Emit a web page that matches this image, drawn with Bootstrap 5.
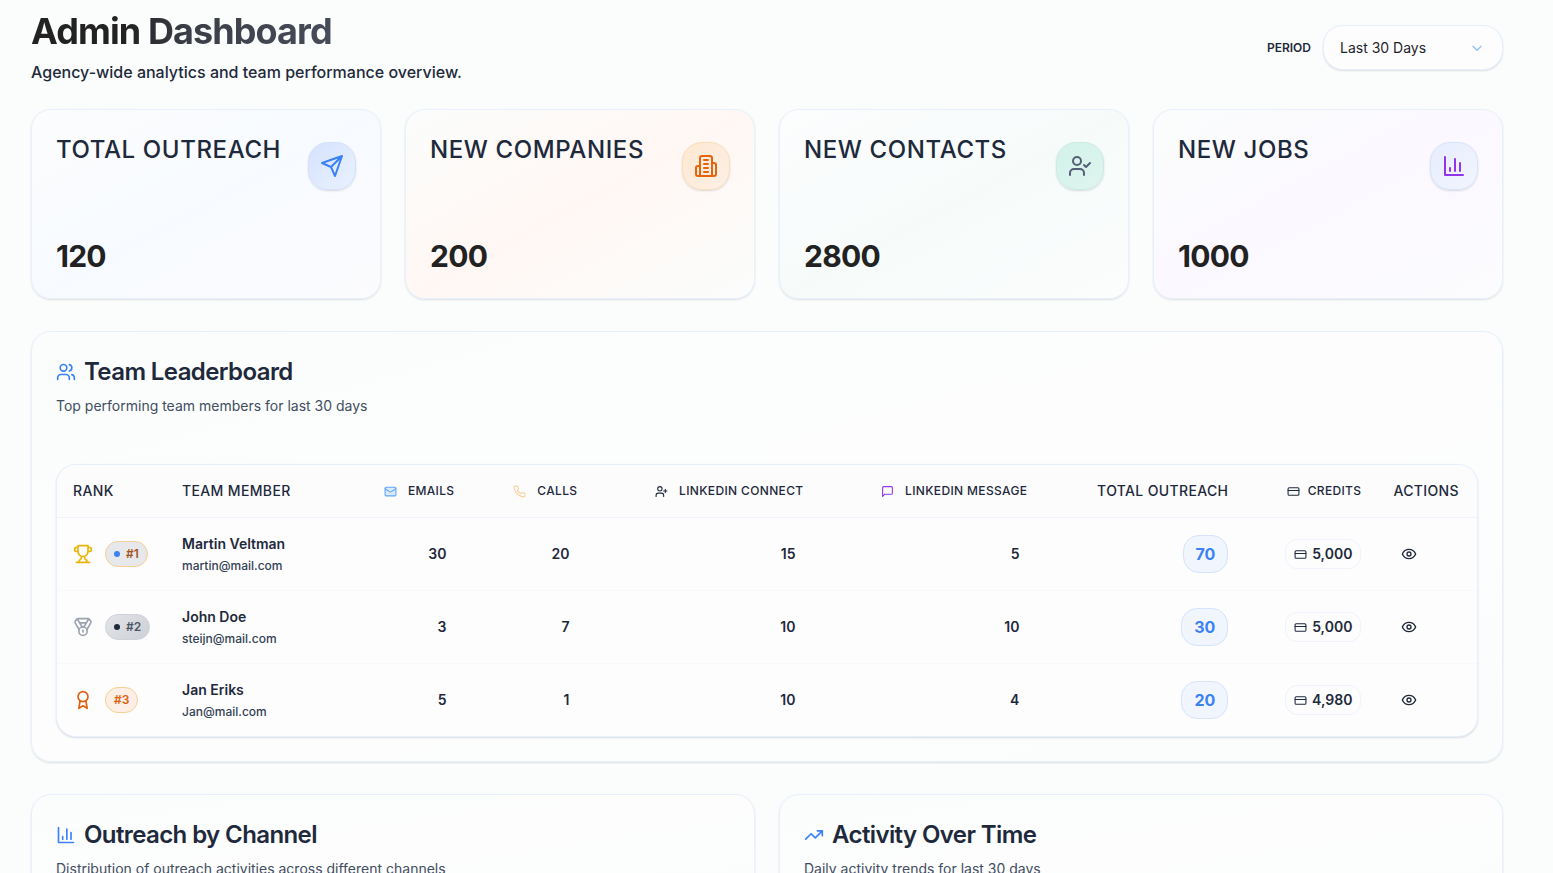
<!DOCTYPE html>
<html lang="en">
<head>
<meta charset="utf-8">
<meta name="viewport" content="width=device-width, initial-scale=1">
<title>Admin Dashboard</title>
<link rel="stylesheet" href="https://cdn.jsdelivr.net/npm/bootstrap@5.3.0/dist/css/bootstrap.min.css">
<style>
  :root { --ink: #1e293b; --line: #e8f0fe; --blue: #3b82f6; }
  body { font-family: Inter, "Liberation Sans", sans-serif; color: var(--ink); background: #fbfdfc; font-size: 14px; line-height: 20px; }
  .page { padding: 11px 50px 32px 31px; }
  svg.ico { fill: none; stroke: currentColor; stroke-width: 2; stroke-linecap: round; stroke-linejoin: round; flex: none; width: 20px; height: 20px; }
  svg.ico-s { width: 13px; height: 13px; }
  svg.ico-m { width: 16px; height: 16px; }
  svg.ico-l { width: 24px; height: 24px; }

  .page-title { font-size: 36px; line-height: 40px; font-weight: 700; letter-spacing: -0.025em; margin: 0 0 9px; background: linear-gradient(to right, #222 22%, #3b3e46 36%, #4b5060 80%); -webkit-background-clip: text; background-clip: text; color: transparent; }
  .page-sub { font-size: 16px; line-height: 24px; font-weight: 500; margin: 0; }
  .page-head { margin-bottom: 25px; }
  .period-label { font-size: 12px; font-weight: 600; }
  .period-select { width: 180px; height: 45px; border: 1px solid var(--line); border-radius: 20px; padding: 0 16px; font-size: 14px; color: #1f2328; background-color: #fdfdfe; background-position: right 18px center; background-size: 14px 14px; box-shadow: 0 1px 2px rgba(30,41,59,.14);
    background-image: url("data:image/svg+xml,%3Csvg xmlns='http://www.w3.org/2000/svg' viewBox='0 0 24 24' fill='none' stroke='%2393c0fd' stroke-width='2.4' stroke-linecap='round' stroke-linejoin='round'%3E%3Cpath d='m5 9 7 7 7-7'/%3E%3C/svg%3E"); }

  .panel { border: 1px solid var(--line); border-radius: 20px; padding: 24px; background: linear-gradient(to bottom right, #fbfdfc, #fdfdfe 50%, #fbfdfc); box-shadow: 0 1px 2px rgba(30,41,59,.14); }
  .leaderboard { margin-top: 32px; }
  .charts { margin-top: 8px; }
  .panel-title { font-size: 24px; line-height: 32px; font-weight: 600; letter-spacing: -0.025em; margin: 0 0 8px; }
  .panel-title svg { color: var(--blue); }
  .panel-sub { color: #414d60; margin: 0; }

  .stat-name { font-size: 24px; line-height: 32px; font-weight: 500; letter-spacing: 0.025em; margin: 0; }
  .stat-value { font-size: 30px; line-height: 36px; font-weight: 700; letter-spacing: -0.025em; color: #222; margin-top: 48px; }
  .stat-icon { width: 48px; height: 48px; margin-top: 8px; border: 1px solid; border-radius: 20px; box-shadow: 0 1px 2px rgba(30,41,59,.16); }
  .stat-blue { background: linear-gradient(to bottom right, #fcfdfd, #f7faff 50%, #fcfcfe); }
  .stat-orange { background: linear-gradient(to bottom right, #fbfdfc, #fff7f4 50%, #fbfdfc); }
  .stat-green { background: linear-gradient(to bottom right, #fdfdfe, #f6fbfa 50%, #fcfdfd); }
  .stat-purple { background: linear-gradient(to bottom right, #fbfdfc, #fbf8ff 50%, #fcfcfe); }
  .stat-blue .stat-icon { color: var(--blue); border-color: #d5e1fd; background: linear-gradient(135deg, #d6e2fe, #e8f2fe); }
  .stat-orange .stat-icon { color: #e8630c; border-color: #f9deb9; background: linear-gradient(135deg, #fde8d2, #fdf0e6); }
  .stat-green .stat-icon { color: #526175; border-color: #cdebe2; background: linear-gradient(135deg, #d3f2ea, #def5ee); }
  .stat-purple .stat-icon { color: #9333ea; border-color: #d8e3fc; background: linear-gradient(135deg, #e6edfd, #f3f5fe); }

  .board { border: 1px solid var(--line); border-radius: 20px; margin-top: 48px; overflow: hidden; background: #fdfdfe; box-shadow: 0 1px 2px rgba(30,41,59,.16); }
  .board table { width: 100%; table-layout: fixed; margin: 0; border-collapse: separate; border-spacing: 0; }
  .board th { height: 53px; padding: 0 16px; font-weight: 500; letter-spacing: 0.025em; white-space: nowrap; border-bottom: 1px solid #eef2fd; background: #fcfcfd; }
  .board td { height: 73px; padding: 0 16px; border-bottom: 1px solid #f7f9fd; }
  .board tr:last-child td { height: 72px; border-bottom: 0; }
  .board .num { text-align: right; }
  .board td.count { padding-right: 24px; font-weight: 600; }
  .head-label { display: flex; align-items: center; justify-content: flex-end; gap: 11px; font-size: 12px; }
  .head-label.tight { gap: 8px; }
  .c-rank { width: 7.68%; } .c-member { width: 14.26%; } .c-mail { width: 7.18%; } .c-call { width: 8.66%; } .c-conn { width: 15.92%; }
  .c-msg { width: 15.77%; } .c-total { width: 14.15%; } .c-cred { width: 9.37%; } .c-act { width: 7.01%; }
  .ico-mail { color: #60a5fa; } .ico-mail rect { fill: #dbeafe; }
  .ico-call { color: #fbcf9a; }
  .ico-msg { color: #9333ea; }
  .ico-gold { color: #eab308; }
  .ico-silver { color: #9ca3af; }
  .ico-bronze { color: #e0600f; }

  .rank-cell { display: flex; align-items: center; gap: 12px; }
  .rank-pill { display: inline-flex; align-items: center; gap: 6px; height: 26px; padding: 0 8px; border: 1px solid; border-radius: 13px; font-size: 12px; font-weight: 600; }
  .rank-pill i { width: 6px; height: 6px; border-radius: 50%; }
  .rank-1 { color: #a3541c; border-color: #f6cf96; background: #e7e8eb; } .rank-1 i { background: var(--blue); }
  .rank-2 { color: #4b5563; border-color: #cfd2d8; background: linear-gradient(135deg, #e2e4e8, #cdd0d6); } .rank-2 i { background: var(--ink); }
  .rank-3 { color: #d9610f; border-color: #f6cf96; background: #fbefe6; }
  .member { font-weight: 600; line-height: 20px; }
  .member-mail { font-size: 12px; line-height: 16px; margin-top: 4px; color: #334155; font-weight: 500; }
  .total-pill { display: inline-block; padding: 0 12px; line-height: 36px; border: 1px solid #d5e3fd; border-radius: 16px; background: #f1f5fe; color: var(--blue); font-size: 16px; font-weight: 700; vertical-align: middle; }
  .credit-pill { display: inline-flex; align-items: center; gap: 5px; height: 30px; padding: 0 8px; border: 1px solid #f0f3fd; border-radius: 12px; font-weight: 600; vertical-align: middle; }
  .eye-btn { display: inline-flex; width: 32px; height: 32px; padding: 0; border: 0; align-items: center; justify-content: center; color: #1f2937; vertical-align: middle; }
</style>
</head>
<body>
<svg class="d-none" xmlns="http://www.w3.org/2000/svg">
  <symbol id="i-chart" viewBox="0 0 24 24"><path d="M3 3v18h18M18 17V9M13 17V5M8 17v-3"/></symbol>
  <symbol id="i-card" viewBox="0 0 24 24"><rect width="20" height="14" x="2" y="5" rx="2"/><path d="M2 10h20"/></symbol>
  <symbol id="i-eye" viewBox="0 0 24 24"><path d="M2 12s3-7 10-7 10 7 10 7-3 7-10 7-10-7-10-7Z"/><circle cx="12" cy="12" r="3"/></symbol>
</svg>
<main class="page container-fluid">
  <header class="page-head d-flex justify-content-between align-items-center">
    <div>
      <h1 class="page-title">Admin Dashboard</h1>
      <p class="page-sub">Agency-wide analytics and team performance overview.</p>
    </div>
    <div class="d-flex align-items-center gap-2">
      <label class="period-label me-1" for="period">PERIOD</label>
      <select class="form-select period-select" id="period"><option>Last 30 Days</option><option>Last 7 Days</option></select>
    </div>
  </header>

  <section class="row row-cols-4 g-4">
    <div class="col"><div class="panel stat-blue">
      <div class="d-flex justify-content-between align-items-start">
        <h2 class="stat-name">TOTAL OUTREACH</h2>
        <span class="stat-icon d-flex align-items-center justify-content-center"><svg class="ico ico-l" viewBox="0 0 24 24"><path d="m22 2-7 20-4-9-9-4ZM22 2 11 13"/></svg></span>
      </div>
      <div class="stat-value">120</div>
    </div></div>
    <div class="col"><div class="panel stat-orange">
      <div class="d-flex justify-content-between align-items-start">
        <h2 class="stat-name">NEW COMPANIES</h2>
        <span class="stat-icon d-flex align-items-center justify-content-center"><svg class="ico ico-l" viewBox="0 0 24 24"><path d="M6 22V4a2 2 0 0 1 2-2h8a2 2 0 0 1 2 2v18ZM6 12H4a2 2 0 0 0-2 2v6a2 2 0 0 0 2 2h2M18 9h2a2 2 0 0 1 2 2v9a2 2 0 0 1-2 2h-2M10 6h4M10 10h4M10 14h4M10 18h4"/></svg></span>
      </div>
      <div class="stat-value">200</div>
    </div></div>
    <div class="col"><div class="panel stat-green">
      <div class="d-flex justify-content-between align-items-start">
        <h2 class="stat-name">NEW CONTACTS</h2>
        <span class="stat-icon d-flex align-items-center justify-content-center"><svg class="ico ico-l" viewBox="0 0 24 24"><path d="M16 21v-2a4 4 0 0 0-4-4H6a4 4 0 0 0-4 4v2"/><circle cx="9" cy="7" r="4"/><path d="m16 11 2 2 4-4"/></svg></span>
      </div>
      <div class="stat-value">2800</div>
    </div></div>
    <div class="col"><div class="panel stat-purple">
      <div class="d-flex justify-content-between align-items-start">
        <h2 class="stat-name">NEW JOBS</h2>
        <span class="stat-icon d-flex align-items-center justify-content-center"><svg class="ico ico-l"><use href="#i-chart"/></svg></span>
      </div>
      <div class="stat-value">1000</div>
    </div></div>
  </section>

  <section class="panel leaderboard">
    <h2 class="panel-title d-flex align-items-center gap-2"><svg class="ico" viewBox="0 0 24 24"><path d="M16 21v-2a4 4 0 0 0-4-4H6a4 4 0 0 0-4 4v2"/><circle cx="9" cy="7" r="4"/><path d="M22 21v-2a4 4 0 0 0-3-3.87M16 3.13a4 4 0 0 1 0 7.75"/></svg>Team Leaderboard</h2>
    <p class="panel-sub">Top performing team members for last 30 days</p>
    <div class="board">
      <table>
        <colgroup><col class="c-rank"><col class="c-member"><col class="c-mail"><col class="c-call"><col class="c-conn"><col class="c-msg"><col class="c-total"><col class="c-cred"><col class="c-act"></colgroup>
        <thead>
          <tr>
            <th>RANK</th>
            <th>TEAM MEMBER</th>
            <th class="num"><span class="head-label"><svg class="ico ico-s ico-mail" viewBox="0 0 24 24"><rect width="20" height="16" x="2" y="4" rx="2"/><path d="m22 7-8.97 5.7a1.94 1.94 0 0 1-2.06 0L2 7"/></svg>EMAILS</span></th>
            <th class="num"><span class="head-label"><svg class="ico ico-s ico-call" viewBox="0 0 24 24"><path d="M22 16.92v3a2 2 0 0 1-2.18 2 19.79 19.79 0 0 1-8.63-3.07 19.5 19.5 0 0 1-6-6 19.79 19.79 0 0 1-3.07-8.67A2 2 0 0 1 4.11 2h3a2 2 0 0 1 2 1.72 12.84 12.84 0 0 0 .7 2.81 2 2 0 0 1-.45 2.11L8.09 9.91a16 16 0 0 0 6 6l1.27-1.27a2 2 0 0 1 2.11-.45 12.84 12.84 0 0 0 2.81.7A2 2 0 0 1 22 16.92z"/></svg>CALLS</span></th>
            <th class="num"><span class="head-label"><svg class="ico ico-s" viewBox="0 0 24 24"><path d="M16 21v-2a4 4 0 0 0-4-4H6a4 4 0 0 0-4 4v2"/><circle cx="9" cy="7" r="4"/><path d="M19 8v6M22 11h-6"/></svg>LINKEDIN CONNECT</span></th>
            <th class="num"><span class="head-label"><svg class="ico ico-s ico-msg" viewBox="0 0 24 24"><path d="M21 15a2 2 0 0 1-2 2H7l-4 4V5a2 2 0 0 1 2-2h14a2 2 0 0 1 2 2z"/></svg>LINKEDIN MESSAGE</span></th>
            <th class="num">TOTAL OUTREACH</th>
            <th class="num"><span class="head-label tight"><svg class="ico ico-s"><use href="#i-card"/></svg>CREDITS</span></th>
            <th>ACTIONS</th>
          </tr>
        </thead>
        <tbody>
          <tr>
            <td><div class="rank-cell"><svg class="ico ico-gold" viewBox="0 0 24 24"><path d="M6 9H4.5a2.5 2.5 0 0 1 0-5H6M18 9h1.5a2.5 2.5 0 0 0 0-5H18M4 22h16M10 14.66V17c0 .55-.47.98-.97 1.21C7.85 18.75 7 20.24 7 22M14 14.66V17c0 .55.47.98.97 1.21C16.15 18.75 17 20.24 17 22M18 2H6v7a6 6 0 0 0 12 0V2Z"/></svg><span class="rank-pill rank-1"><i></i>#1</span></div></td>
            <td><div class="member">Martin Veltman</div><div class="member-mail">martin@mail.com</div></td>
            <td class="num count">30</td><td class="num count">20</td><td class="num count">15</td><td class="num count">5</td>
            <td class="num"><span class="total-pill">70</span></td>
            <td class="num"><span class="credit-pill"><svg class="ico ico-s"><use href="#i-card"/></svg>5,000</span></td>
            <td><button class="btn eye-btn" type="button" aria-label="View Martin Veltman"><svg class="ico ico-m"><use href="#i-eye"/></svg></button></td>
          </tr>
          <tr>
            <td><div class="rank-cell"><svg class="ico ico-silver" viewBox="0 0 24 24"><path d="M7.21 15 2.66 7.14a2 2 0 0 1 .13-2.2L4.4 2.8A2 2 0 0 1 6 2h12a2 2 0 0 1 1.6.8l1.6 2.14a2 2 0 0 1 .14 2.2L16.79 15M11 12 5.12 2.2M13 12l5.88-9.8M8 7h8"/><circle cx="12" cy="17" r="5"/><path d="M12 18v-2h-.5"/></svg><span class="rank-pill rank-2"><i></i>#2</span></div></td>
            <td><div class="member">John Doe</div><div class="member-mail">steijn@mail.com</div></td>
            <td class="num count">3</td><td class="num count">7</td><td class="num count">10</td><td class="num count">10</td>
            <td class="num"><span class="total-pill">30</span></td>
            <td class="num"><span class="credit-pill"><svg class="ico ico-s"><use href="#i-card"/></svg>5,000</span></td>
            <td><button class="btn eye-btn" type="button" aria-label="View John Doe"><svg class="ico ico-m"><use href="#i-eye"/></svg></button></td>
          </tr>
          <tr>
            <td><div class="rank-cell"><svg class="ico ico-bronze" viewBox="0 0 24 24"><circle cx="12" cy="8" r="6"/><path d="M15.477 12.89 17 22l-5-3-5 3 1.523-9.11"/></svg><span class="rank-pill rank-3">#3</span></div></td>
            <td><div class="member">Jan Eriks</div><div class="member-mail">Jan@mail.com</div></td>
            <td class="num count">5</td><td class="num count">1</td><td class="num count">10</td><td class="num count">4</td>
            <td class="num"><span class="total-pill">20</span></td>
            <td class="num"><span class="credit-pill"><svg class="ico ico-s"><use href="#i-card"/></svg>4,980</span></td>
            <td><button class="btn eye-btn" type="button" aria-label="View Jan Eriks"><svg class="ico ico-m"><use href="#i-eye"/></svg></button></td>
          </tr>
        </tbody>
      </table>
    </div>
  </section>

  <section class="row row-cols-2 g-4 charts">
    <div class="col"><div class="panel">
      <h2 class="panel-title d-flex align-items-center gap-2"><svg class="ico"><use href="#i-chart"/></svg>Outreach by Channel</h2>
      <p class="panel-sub">Distribution of outreach activities across different channels</p>
    </div></div>
    <div class="col"><div class="panel">
      <h2 class="panel-title d-flex align-items-center gap-2"><svg class="ico" viewBox="0 0 24 24"><path d="m22 7-8.5 8.5-5-5L2 17M16 7h6v6"/></svg>Activity Over Time</h2>
      <p class="panel-sub">Daily activity trends for last 30 days</p>
    </div></div>
  </section>
</main>
<script src="https://cdn.jsdelivr.net/npm/bootstrap@5.3.0/dist/js/bootstrap.bundle.min.js"></script>
</body>
</html>
